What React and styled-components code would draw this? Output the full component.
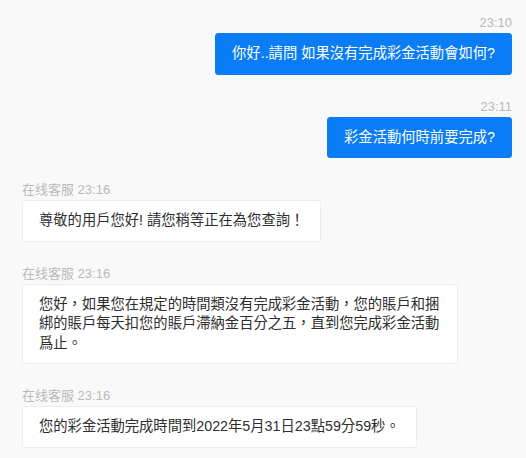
import React from 'react'
import styled, { createGlobalStyle } from 'styled-components'

const GlobalStyle = createGlobalStyle`
  html, body {
    margin: 0;
    padding: 0;
    background: #f9f9f9;
  }
  body {
    font-family: "Liberation Sans", Arial, "Noto Sans CJK TC", sans-serif;
  }
`

const messages = [
  { id: 1, mine: true, time: '23:10', text: '你好..請問 如果沒有完成彩金活動會如何?' },
  { id: 2, mine: true, time: '23:11', text: '彩金活動何時前要完成?' },
  { id: 3, mine: false, time: '23:16', text: '尊敬的用戶您好! 請您稍等正在為您查詢！' },
  {
    id: 4,
    mine: false,
    time: '23:16',
    text: '您好，如果您在規定的時間類沒有完成彩金活動，您的賬戶和捆綁的賬戶每天扣您的賬戶滯納金百分之五，直到您完成彩金活動爲止。',
  },
  { id: 5, mine: false, time: '23:16', text: '您的彩金活動完成時間到2022年5月31日23點59分59秒。' },
]

export default function App() {
  return (
    <>
      <GlobalStyle />
      <ChatWrapper>
        {messages.map(m => (
          <Message key={m.id} $mine={m.mine}>
            <Meta>{m.mine ? m.time : `在线客服 ${m.time}`}</Meta>
            <Bubble $mine={m.mine}>{m.text}</Bubble>
          </Message>
        ))}
      </ChatWrapper>
    </>
  )
}

const ChatWrapper = styled.div`
  width: 526px;
  height: 458px;
  box-sizing: border-box;
  padding: 15px 14px 0 22px;
  background: #f9f9f9;
  overflow: hidden;
`

const Message = styled.div`
  display: flex;
  flex-direction: column;
  align-items: ${p => (p.$mine ? 'flex-end' : 'flex-start')};
  margin-bottom: 24px;
`

const Meta = styled.div`
  font-size: 13px;
  line-height: 15px;
  color: #b9b9b9;
  margin-bottom: 3px;
`

const Bubble = styled.div`
  box-sizing: border-box;
  max-width: 436px;
  padding: 10px 16px;
  font-size: 14.3px;
  line-height: 19.5px;
  border-radius: 3px;
  background: ${p => (p.$mine ? '#0a7cf5' : '#ffffff')};
  color: ${p => (p.$mine ? '#ffffff' : '#2e2e2e')};
  border: 1px solid ${p => (p.$mine ? '#0a7cf5' : '#ececec')};
`
